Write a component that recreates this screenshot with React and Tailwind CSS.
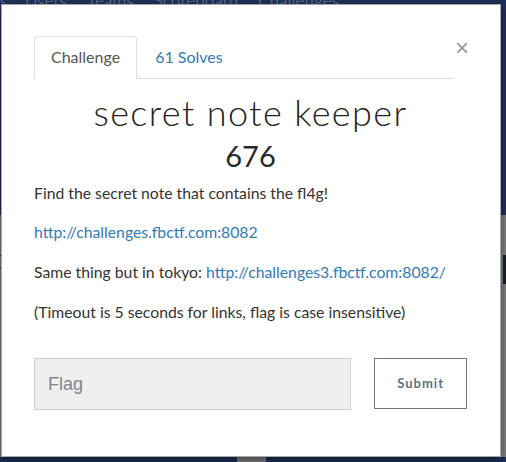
import React from 'react';

const NAV = ['s', 'Users', 'Teams', 'Scoreboard', 'Challenges'];

export default function App() {
  return (
    <div className="relative w-[506px] h-[462px] overflow-hidden bg-[#1e3159] font-['Lato','Noto_Sans',sans-serif]">
      {/* page behind the modal */}
      <div className="flex flex-col h-full">
        <div className="h-[215px] bg-[#1e3159] relative">
          <div className="flex gap-[20px] -mt-[12px] text-[17px] text-[#56658a]">
            {NAV.map((n) => (
              <span key={n} className={n === 's' ? 'w-[5px] overflow-hidden' : ''}>{n}</span>
            ))}
          </div>
        </div>
        <div className="h-[242px] bg-[#808080] flex justify-between items-start pt-[40px]">
          <span className="w-[2px] h-[14px] border-y border-[#222]"></span>
          <span className="w-[3px] h-[29px] bg-[#1a1f2e]"></span>
        </div>
        <div className="flex-1 bg-[#1e3159] flex">
          <div className="ml-[237px] w-[29px] bg-[#7d7d7d]"></div>
        </div>
      </div>

      {/* modal */}
      <div className="absolute left-[1px] top-[4px] w-[500px] h-[453px] bg-white border border-[#a9a9a9] shadow-[0_3px_9px_rgba(0,0,0,0.5)] pl-[32px] pr-[33px] pt-[31px]">
        <div className="flex items-start">
          <ul className="flex flex-1 border-b border-[#dddddd] text-[16px]">
            <li className="-mb-px px-[16px] py-[10px] leading-[20px] border border-[#dddddd] border-b-white rounded-t-[4px] bg-white text-[#555555]">
              Challenge
            </li>
            <li className="ml-[1px] px-[16px] py-[10px] leading-[20px] border border-transparent text-[#337ab7]">
              61 Solves
            </li>
          </ul>
          <button className="ml-[1px] w-[12px] mt-[4px] text-[24px] leading-[16px] text-[#999999] font-['Liberation_Sans',sans-serif]">
            ×
          </button>
        </div>

        <h2 className="mt-[13px] text-center text-[36px] leading-[40px] font-light tracking-[1.4px] text-[#222222]">
          secret note keeper
        </h2>
        <div className="mt-[6px] text-center text-[29px] leading-[36px] text-[#2a2a2a]">676</div>

        <div className="mt-[8px] text-[15.75px] leading-[21px] text-[#333333]">
          <p className="mb-[18px]">Find the secret note that contains the fl4g!</p>
          <p className="mb-[19px]">
            <a className="text-[#337ab7]">http://challenges.fbctf.com:8082</a>
          </p>
          <p className="mb-[19px]">
            Same thing but in tokyo: <a className="text-[#337ab7]">http://challenges3.fbctf.com:8082/</a>
          </p>
          <p>(Timeout is 5 seconds for links, flag is case insensitive)</p>
        </div>

        <div className="mt-[36px] flex items-start">
          <div className="w-[318px] h-[52px] bg-[#efefef] border border-[#cdd2d7] flex items-center pl-[13px] font-['Liberation_Sans',sans-serif] text-[18px] text-[#7d858d]">
            Flag
          </div>
          <button className="ml-[23px] w-[93px] h-[51px] border border-[#70777e] bg-white text-[13px] font-bold tracking-[1px] text-[#66707a]">
            Submit
          </button>
        </div>
      </div>
    </div>
  );
}
